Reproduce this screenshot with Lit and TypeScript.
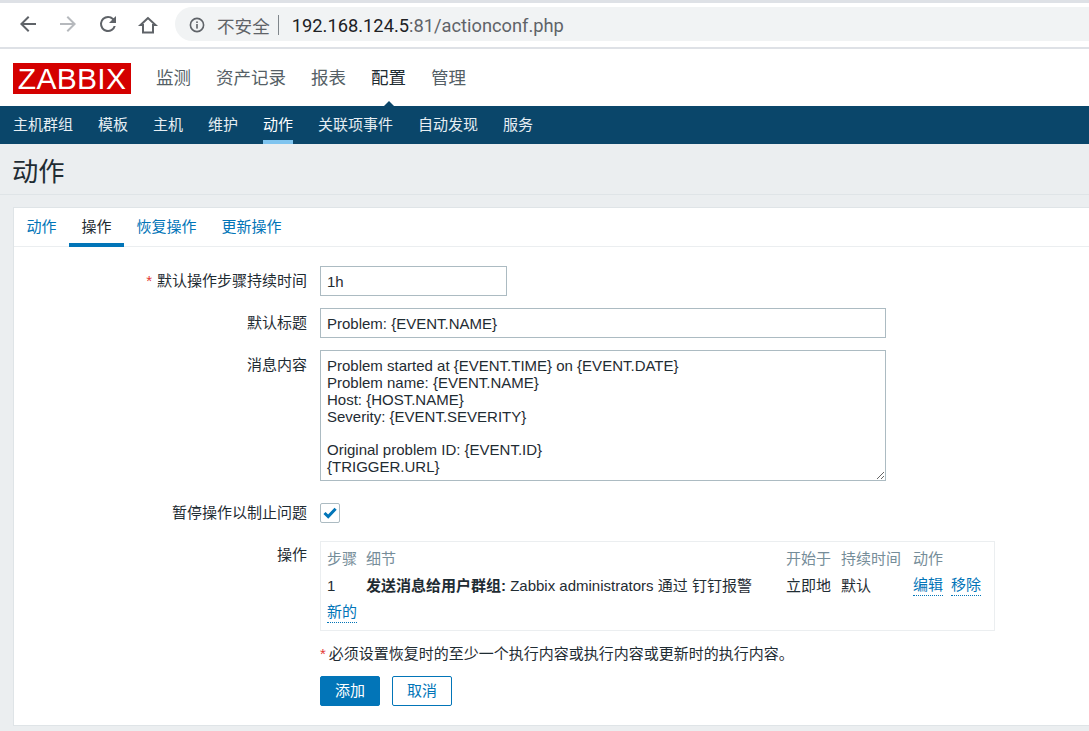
import { LitElement, html, css } from "lit";
import { customElement } from "lit/decorators.js";

const FONT = css`"Liberation Sans", "Noto Sans CJK SC", Arial, sans-serif`;

@customElement("app-root")
export class AppRoot extends LitElement {
  static styles = css`
    :host { display: block; width: 1089px; height: 731px; overflow: hidden; background: #ebeef0; font-family: ${FONT}; font-size: 15px; color: #1f2c33; }
    * { box-sizing: border-box; }
    .strip { height: 3px; background: #dee1e6; }
    .toolbar { height: 46px; background: #fff; border-bottom: 2px solid #dee1e6; display: flex; align-items: center; padding: 0 0 2px 16px; }
    .tb-ic { width: 24px; height: 24px; margin-right: 16px; display: block; flex: none; }
    .tb-ic.home { margin-right: 15px; }
    .omni { flex: 1; height: 34px; background: #f1f3f4; border-radius: 17px 0 0 17px; display: flex; align-items: center; padding-left: 14px; font-family: "Noto Sans CJK SC", "Roboto", sans-serif; font-size: 17.6px; color: #5f6368; white-space: nowrap; }
    .omni svg { width: 16px; height: 16px; margin: 1px 12px 0 0; flex: none; }
    .omni .txt { position: relative; top: 1px; }
    .omni .sep { width: 1px; height: 20px; background: #80868b; margin: 1px 13px 0 8px; }
    .omni .url { font-family: Roboto, sans-serif; font-size: 18.3px; color: #5f6368; }
    .omni .url b { font-weight: 400; color: #202124; }
    .head { height: 57px; background: #fff; display: flex; align-items: center; padding: 0 0 0 13px; }
    .logo { width: 118px; height: 31px; background: #d40000; color: #fff; font-size: 30px; line-height: 32px; text-align: center; letter-spacing: 0.3px; margin: 1px 25px 0 0; white-space: nowrap; }
    .main { display: flex; gap: 25px; font-size: 17.5px; margin-top: -2px; }
    .main span { position: relative; color: #555f66; }
    .main .on { color: #1f2c33; }
    .main .on::after { content: ""; position: absolute; left: 50%; bottom: -20px; margin-left: -8px; border: 8px solid transparent; border-top: 0; border-bottom-color: #0a466a; }
    .sub { height: 38px; background: #0a466a; display: flex; gap: 25px; padding: 0 13px; align-items: center; color: #e6eef3; }
    .sub span { height: 38px; line-height: 37px; }
    .sub .on { color: #fff; border-bottom: 4px solid #7fc4ef; }
    .title { margin: 0; height: 51px; border-bottom: 1px solid #dfe4e7; font-size: 26.25px; font-weight: 400; line-height: 56px; padding-left: 12px; color: #1f2c33; }
    .card { margin: 12px 0 0 13px; height: 519px; background: #fff; border: 1px solid #dfe4e7; border-right: 0; display: flex; flex-direction: column; }
    .tabs { display: flex; height: 39px; border-bottom: 1px solid #ebeef0; }
    .tab { padding: 0 12.5px; line-height: 38px; color: #0275b8; height: 39px; }
    .tab.on { color: #1f2c33; border-bottom: 4px solid #0275b8; }
    .form { padding-top: 19px; display: flex; flex-direction: column; }
    .row { display: grid; grid-template-columns: 293px 1fr; column-gap: 13px; margin-bottom: 12px; }
    .lab { text-align: right; line-height: 30px; color: #1f2c33; }
    .req { color: #e33734; margin-right: 3px; }
    .lab .req { margin-right: 5px; }
    input, textarea { font-family: ${FONT}; font-size: 15px; color: #1f2c33; border: 1px solid #acbbc2; background: #fff; padding: 0 6px; margin: 0; outline: none; display: block; border-radius: 0; }
    input { height: 30px; }
    .w1 { width: 187px; }
    .w2 { width: 566px; }
    textarea { width: 566px; height: 131px; line-height: 16.85px; padding: 7px 6px 0; resize: both; overflow: hidden; }
    .cb { width: 20px; height: 20px; border: 1px solid #acbbc2; border-radius: 2px; margin: 5px 0; display: flex; align-items: center; justify-content: center; }
    .cb svg { width: 14px; height: 12px; display: block; }
    .r-check { margin-top: 5px; margin-bottom: 13px; }
    .ops { width: 675px; height: 90px; border: 1px solid #ebeef0; padding: 3px 6px 0; }
    .lab.top { line-height: 28px; }
    .grid { display: grid; grid-template-columns: 39px 420px 55px 72px auto; grid-auto-rows: 27px; align-items: center; }
    .th { color: #768d99; line-height: 20px; }
    .det { white-space: nowrap; }
    .det b { font-weight: 700; }
    .link { color: #0275b8; border-bottom: 1px dotted #0275b8; line-height: 20px; display: inline-block; }
    .cell { line-height: 20px; }
    .acts { display: flex; gap: 8px; }
    .note { line-height: 18px; margin-top: 14px; }
    .btns { display: flex; gap: 12px; margin-top: 13px; }
    .btn { width: 60px; height: 30px; border: 1px solid #0275b8; border-radius: 2px; line-height: 28px; text-align: center; color: #0275b8; background: #fff; }
    .btn.pri { background: #0275b8; color: #fff; }
  `;

  render() {
    return html`
      <div class="strip"></div>
      <div class="toolbar">
        <svg class="tb-ic" viewBox="0 0 24 24" fill="#5f6368"><path d="M20 11H7.83l5.59-5.59L12 4l-8 8 8 8 1.41-1.41L7.83 13H20v-2z"/></svg>
        <svg class="tb-ic" viewBox="0 0 24 24" fill="#b6b9bd"><path d="M12 4l-1.41 1.41L16.17 11H4v2h12.17l-5.58 5.59L12 20l8-8z"/></svg>
        <svg class="tb-ic" viewBox="0 0 24 24" fill="#5f6368"><path d="M17.65 6.35A7.96 7.96 0 0 0 12 4a8 8 0 1 0 7.73 10h-2.08A6 6 0 1 1 12 6c1.66 0 3.14.69 4.22 1.78L13 11h7V4l-2.35 2.35z"/></svg>
        <svg class="tb-ic home" viewBox="0 0 24 24" fill="none" stroke="#5f6368" stroke-width="2"><path d="M12 6 4.5 13H7v7.5h10V13h2.5z"/></svg>
        <div class="omni">
          <svg viewBox="0 0 16 16"><circle cx="8" cy="8" r="6.6" fill="none" stroke="#5f6368" stroke-width="1.6"/><rect x="7.2" y="7" width="1.6" height="4.6" fill="#5f6368"/><rect x="7.2" y="4.4" width="1.6" height="1.6" fill="#5f6368"/></svg>
          <span class="txt">不安全</span><i class="sep"></i><span class="url txt"><b>192.168.124.5</b>:81/actionconf.php</span>
        </div>
      </div>
      <div class="head">
        <div class="logo">ZABBIX</div>
        <div class="main"><span>监测</span><span>资产记录</span><span>报表</span><span class="on">配置</span><span>管理</span></div>
      </div>
      <div class="sub"><span>主机群组</span><span>模板</span><span>主机</span><span>维护</span><span class="on">动作</span><span>关联项事件</span><span>自动发现</span><span>服务</span></div>
      <h1 class="title">动作</h1>
      <div class="card">
        <div class="tabs"><div class="tab">动作</div><div class="tab on">操作</div><div class="tab">恢复操作</div><div class="tab">更新操作</div></div>
        <div class="form">
          <div class="row"><div class="lab"><span class="req">*</span>默认操作步骤持续时间</div><div><input class="w1" .value=${"1h"} /></div></div>
          <div class="row"><div class="lab">默认标题</div><div><input class="w2" .value=${"Problem: {EVENT.NAME}"} /></div></div>
          <div class="row"><div class="lab">消息内容</div><div><textarea .value=${"Problem started at {EVENT.TIME} on {EVENT.DATE}\nProblem name: {EVENT.NAME}\nHost: {HOST.NAME}\nSeverity: {EVENT.SEVERITY}\n\nOriginal problem ID: {EVENT.ID}\n{TRIGGER.URL}"}></textarea></div></div>
          <div class="row r-check"><div class="lab">暂停操作以制止问题</div><div><div class="cb"><svg viewBox="0 0 14 12"><path d="M1.5 6 5.2 9.6 12.6 1.8" fill="none" stroke="#0275b8" stroke-width="3"/></svg></div></div></div>
          <div class="row"><div class="lab top">操作</div><div>
            <div class="ops"><div class="grid">
              <span class="th">步骤</span><span class="th">细节</span><span class="th">开始于</span><span class="th">持续时间</span><span class="th">动作</span>
              <span class="cell">1</span><span class="det cell"><b>发送消息给用户群组:</b> Zabbix administrators 通过 钉钉报警</span><span class="cell">立即地</span><span class="cell">默认</span><span class="acts"><span class="link">编辑</span><span class="link">移除</span></span>
              <span><span class="link">新的</span></span>
            </div></div>
            <div class="note"><span class="req">*</span>必须设置恢复时的至少一个执行内容或执行内容或更新时的执行内容。</div>
            <div class="btns"><div class="btn pri">添加</div><div class="btn">取消</div></div>
          </div></div>
        </div>
      </div>
    `;
  }
}
